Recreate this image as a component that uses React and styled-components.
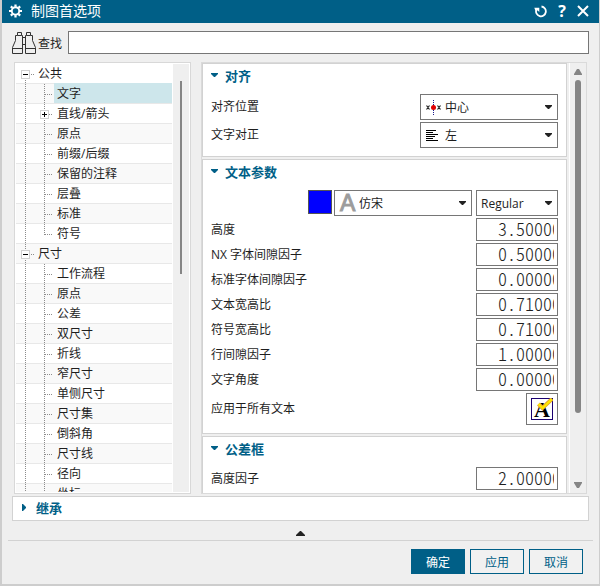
import React from 'react';
import styled, { createGlobalStyle } from 'styled-components';

const blue = '#005f87';
const panelGrey = '#efefef';
const line = '#d2d2d2';
const fieldLine = '#767676';

const treeItems = [
  { label: '公共', level: 1, first: true },
  { label: '文字', level: 2, selected: true },
  { label: '直线/箭头', level: 2, closed: true },
  { label: '原点', level: 2 },
  { label: '前缀/后缀', level: 2 },
  { label: '保留的注释', level: 2 },
  { label: '层叠', level: 2 },
  { label: '标准', level: 2 },
  { label: '符号', level: 2, last: true },
  { label: '尺寸', level: 1 },
  { label: '工作流程', level: 2 },
  { label: '原点', level: 2 },
  { label: '公差', level: 2 },
  { label: '双尺寸', level: 2 },
  { label: '折线', level: 2 },
  { label: '窄尺寸', level: 2 },
  { label: '单侧尺寸', level: 2 },
  { label: '尺寸集', level: 2 },
  { label: '倒斜角', level: 2 },
  { label: '尺寸线', level: 2 },
  { label: '径向', level: 2 },
  { label: '坐标', level: 2 },
];

const textParams = [
  { id: 'height', label: '高度', value: '3.50000' },
  { id: 'nxGap', label: 'NX 字体间隙因子', value: '0.50000' },
  { id: 'stdGap', label: '标准字体间隙因子', value: '0.00000' },
  { id: 'textRatio', label: '文本宽高比', value: '0.71000' },
  { id: 'symbolRatio', label: '符号宽高比', value: '0.71000' },
  { id: 'lineGap', label: '行间隙因子', value: '1.00000' },
  { id: 'angle', label: '文字角度', value: '0.00000' },
];

function GearIcon() {
  return (
    <svg width="13" height="14" viewBox="0 0 14 14" fill="none" stroke="#fff">
      <circle cx="7" cy="7" r="4" strokeWidth="2" />
      <path strokeWidth="2.4" d="M7 0v2.5M7 11.5V14M0 7h2.5M11.5 7H14M2 2l1.8 1.8M10.2 10.2L12 12M12 2l-1.8 1.8M3.8 10.2L2 12" />
    </svg>
  );
}

function ResetIcon() {
  return (
    <svg width="13" height="13" viewBox="0 0 13 13" fill="none" stroke="#fff">
      <path strokeWidth="1.800" d="M7.500 1.500A4.900 4.900 0 1 1 2.300 4.800" />
      <path fill="#fff" stroke="none" d="M.3 2.800h5v4.200L3.600 5.400 1.200 5.200z" />
    </svg>
  );
}

function CloseIcon() {
  return (
    <svg width="12" height="12" viewBox="0 0 12 12" stroke="#fff" strokeWidth="2">
      <path d="M1 1l10 10M11 1L1 11" />
    </svg>
  );
}

function BinocularsIcon() {
  return (
    <svg width="24" height="22" viewBox="0 0 24 22" fill="none" stroke="#333">
      <path d="M.5 21.500v-6l3-7v-5h2v-3h4v3h1v18zM23.500 21.500v-6l-3-7v-5h-2v-3h-4v3h-1v18zM.5 16.500h10M13.500 16.500h10M5.500 3.500h4M14.500 3.500h4M10.500 5.500h3M10.500 12.500h3" />
    </svg>
  );
}

const triangles = {
  down: { w: 7, h: 4, d: 'M0 0h7v1L4 4H3L0 1z' },
  right: { w: 4, h: 7, d: 'M0 0h1l3 3v1L1 7H0z' },
  up: { w: 9, h: 5, d: 'M0 5v-1L4 0h1l4 4v1z' },
  scrollUp: { w: 8, h: 6, d: 'M0 6v-1l3-5h2l3 5v1z' },
  scrollDown: { w: 8, h: 6, d: 'M0 0h8v1L5 6H3L0 1z' },
};

function Triangle({ direction, color = '#222' }) {
  const { w, h, d } = triangles[direction];
  return (
    <svg width={w} height={h} viewBox={`0 0 ${w} ${h}`} fill={color}>
      <path d={d} />
    </svg>
  );
}

function CenterIcon() {
  return (
    <svg width="15" height="15" viewBox="0 0 15 15">
      <path d="M7.500 0v15" stroke="#1a1a8c" strokeDasharray="1 1" />
      <path d="M.5 5.500l3 4M3.500 5.500l-3 4M11.500 5.500l3 4M14.500 5.500l-3 4" stroke="#222" strokeWidth="1.200" />
      <circle cx="7.500" cy="7.500" r="2.500" fill="#e00000" />
    </svg>
  );
}

function AlignLeftIcon() {
  return (
    <svg width="12" height="11" viewBox="0 0 12 11" stroke="#000">
      <path d="M0 .5h10M0 2.500h7M0 4.500h12M0 6.500h9M0 8.500h7M0 10.500h12" />
    </svg>
  );
}

function ApplyAllIcon() {
  return (
    <svg width="22" height="22" viewBox="0 0 22 22">
      <rect x=".5" y=".5" width="21" height="21" fill="#fff" stroke="#1a0070" />
      <text x="11" y="19" textAnchor="middle" fontFamily="Liberation Serif, serif" fontWeight="bold" fontSize="22">A</text>
      <path d="M7.500 6l4 4L21 1" fill="none" stroke="#e0a030" strokeWidth="4" />
      <path d="M7.500 6l4 4L21 1" fill="none" stroke="#ffe600" strokeWidth="2.400" />
    </svg>
  );
}

/* dotted connector and expander drawing in front of a tree label */
function Twig({ item }) {
  const dots = { stroke: '#8c8c8c', strokeDasharray: '1 1', shapeRendering: 'crispEdges' };
  if (item.level === 1) {
    return (
      <svg width="22" height="20">
        <path {...dots} d={item.first ? 'M9.500 16v4' : 'M9.500 0v5M9.500 16v4'} />
        <path {...dots} d="M15 10.500h4" />
        <rect x="5.500" y="6.500" width="8" height="8" fill="#fff" stroke="#d0d0d0" />
        <path d="M7 10.500h5" stroke="#000" />
      </svg>
    );
  }
  return (
    <svg width="38" height="20">
      <path {...dots} d="M9.500 0v20" />
      <path {...dots} d={item.last ? 'M28.500 0v11' : 'M28.500 0v20'} />
      <path {...dots} d="M29 10.500h8" />
      {item.closed && (
        <>
          <rect x="24.500" y="6.500" width="8" height="8" fill="#fff" stroke="#d0d0d0" />
          <path d="M26 10.500h5M28.500 8v5" stroke="#000" />
        </>
      )}
    </svg>
  );
}

function Group({ title, children }) {
  return (
    <GroupBox>
      <GroupHeader type="button" aria-expanded="true">
        <Marker><Triangle direction="down" color={blue} /></Marker>
        {title}
      </GroupHeader>
      <Rows>{children}</Rows>
    </GroupBox>
  );
}

function Dropdown({ id, value, icon, label, narrow }) {
  return (
    <SelectBox $narrow={narrow}>
      {icon && <SelectIcon>{icon}</SelectIcon>}
      <Select id={id} aria-label={label} defaultValue={value} $icon={Boolean(icon)}>
        <option>{value}</option>
      </Select>
      <SelectArrow><Triangle direction="down" /></SelectArrow>
    </SelectBox>
  );
}

function NumberRow({ id, label, value }) {
  return (
    <Row>
      <Label htmlFor={id}>{label}</Label>
      <NumberBox>
        <NumberInput id={id} type="text" defaultValue={value} />
      </NumberBox>
    </Row>
  );
}

function App() {
  return (
    <>
      <GlobalStyle />
      <Dialog>
        <TitleBar>
          <GearIcon />
          <Title>制图首选项</Title>
          <TitleButton type="button" aria-label="重置"><ResetIcon /></TitleButton>
          <TitleButton type="button">?</TitleButton>
          <TitleButton type="button" aria-label="关闭"><CloseIcon /></TitleButton>
        </TitleBar>
        <Content>
          <SearchRow>
            <BinocularsIcon />
            <label htmlFor="search">查找</label>
            <SearchInput id="search" type="text" />
          </SearchRow>
          <Panels>
            <TreePanel>
              <Tree role="tree">
                {treeItems.map((item, i) => (
                  <TreeRow key={i} role="treeitem" aria-selected={Boolean(item.selected)}>
                    <Twig item={item} />
                    <TreeLabel $level={item.level} $selected={item.selected}>{item.label}</TreeLabel>
                  </TreeRow>
                ))}
              </Tree>
              <TreeTrack><TreeThumb /></TreeTrack>
            </TreePanel>
            <Settings>
              <Groups>
                <Group title="对齐">
                  <Row>
                    <Label htmlFor="position">对齐位置</Label>
                    <Dropdown id="position" value="中心" icon={<CenterIcon />} />
                  </Row>
                  <Row>
                    <Label htmlFor="justify">文字对正</Label>
                    <Dropdown id="justify" value="左" icon={<AlignLeftIcon />} />
                  </Row>
                </Group>
                <Group title="文本参数">
                  <FontRow>
                    <Swatch type="button" aria-label="颜色" />
                    <Dropdown label="字体" value="仿宋" icon={<FontLetter>A</FontLetter>} />
                    <StyleCell>
                      <Dropdown label="字型" value="Regular" narrow />
                    </StyleCell>
                  </FontRow>
                  {textParams.map((p) => <NumberRow key={p.id} {...p} />)}
                  <Row>
                    <Label htmlFor="applyAll">应用于所有文本</Label>
                    <IconButton id="applyAll" type="button"><ApplyAllIcon /></IconButton>
                  </Row>
                </Group>
                <Group title="公差框">
                  <NumberRow id="frameHeight" label="高度因子" value="2.00000" />
                </Group>
              </Groups>
              <Track>
                <Triangle direction="scrollUp" color="#858585" />
                <Rail><Thumb /></Rail>
                <Triangle direction="scrollDown" color="#858585" />
              </Track>
            </Settings>
          </Panels>
          <InheritBar type="button" aria-expanded="false">
            <Marker><Triangle direction="right" color={blue} /></Marker>
            继承
          </InheritBar>
        </Content>
        <CollapseBar type="button" aria-label="收起"><Triangle direction="up" /></CollapseBar>
        <Footer>
          <FooterButton type="button" $primary>确定</FooterButton>
          <FooterButton type="button">应用</FooterButton>
          <FooterButton type="button">取消</FooterButton>
        </Footer>
      </Dialog>
    </>
  );
}

const GlobalStyle = createGlobalStyle`
  * {
    box-sizing: border-box;
  }
  body {
    margin: 0;
    background: ${panelGrey};
    color: #1e1e1e;
  }
  body, button, input, select {
    font-family: "Open Sans", "Noto Sans CJK SC", sans-serif;
    font-size: 12px;
  }
  button {
    cursor: pointer;
  }
  svg {
    display: block;
    flex: none;
  }
`;

const Dialog = styled.div`
  display: flex;
  flex-direction: column;
  height: 100vh;
  border: solid #cdcdcd;
  border-width: 0 1px 2px 2px;
  background: ${panelGrey};
`;

const TitleBar = styled.header`
  display: flex;
  align-items: center;
  flex: none;
  height: 23px;
  padding: 0 10px 1px 7px;
  gap: 9px;
  background: ${blue};
  color: #fff;
`;

const Title = styled.h1`
  flex: 1;
  margin: 0;
  font-size: 14px;
  line-height: 20px;
  font-weight: 400;
`;

const TitleButton = styled.button`
  display: flex;
  align-items: center;
  justify-content: center;
  min-width: 12px;
  padding: 0;
  border: 0;
  background: none;
  color: #fff;
  font-size: 16px;
  font-weight: 700;
  line-height: 20px;
`;

const Content = styled.main`
  display: flex;
  flex-direction: column;
  flex: 1;
  min-height: 0;
  padding: 8px 10px 0;
`;

const SearchRow = styled.div`
  display: flex;
  align-items: center;
  gap: 2px;
  flex: none;
`;

const SearchInput = styled.input`
  flex: 1;
  min-width: 0;
  height: 23px;
  margin-left: 4px;
  border: 1px solid ${fieldLine};
  background: #fff;
`;

const Panels = styled.div`
  display: flex;
  flex: 1;
  min-height: 0;
  gap: 10px;
  margin: 8px 2px 2px;
`;

const TreePanel = styled.nav`
  display: flex;
  flex: none;
  width: 177px;
  padding: 1px;
  gap: 1px;
  border: 1px solid #d8d8d8;
  background: #fff;
`;

const Tree = styled.ul`
  flex: 1;
  margin: 0;
  padding: 0;
  overflow: hidden;
  list-style: none;
`;

const TreeRow = styled.li`
  display: flex;
  height: 20px;
  box-shadow: inset 0 -1px #e8e8e8;

  &:nth-child(even) {
    background: #f9f9f9;
  }
`;

const TreeLabel = styled.span`
  flex: 1;
  height: 19px;
  padding-left: ${(p) => (p.$level === 2 ? '3px' : '0')};
  line-height: 19px;
  background: ${(p) => (p.$selected ? '#cde6eb' : 'transparent')};
  box-shadow: ${(p) => (p.$selected ? '0 -1px #cde6eb' : 'none')};
`;

const TreeTrack = styled.div`
  flex: none;
  width: 16px;
  padding: 17px 7px 0;
  background: ${panelGrey};
`;

const TreeThumb = styled.div`
  width: 2px;
  height: 47%;
  background: #858585;
`;

const Settings = styled.section`
  display: flex;
  flex: 1;
  min-width: 0;
  border: 1px solid #dadada;
`;

const Groups = styled.div`
  display: flex;
  flex-direction: column;
  flex: 1;
  min-width: 0;
  gap: 2px;
  overflow: hidden;
`;

const GroupBox = styled.section`
  flex: none;
  padding: 0 8px 8px;
  border: 1px solid ${line};
  background: #fff;
`;

const GroupHeader = styled.button`
  display: flex;
  align-items: center;
  width: 100%;
  height: 22px;
  margin-bottom: 8px;
  padding: 0;
  border: 0;
  background: none;
  color: ${blue};
  font-size: 13px;
  font-weight: 700;
`;

const Marker = styled.span`
  width: 14px;
`;

const Rows = styled.div`
  display: flex;
  flex-direction: column;
  gap: 2px;
`;

const Row = styled.div`
  display: flex;
  align-items: center;
  justify-content: space-between;
`;

const FontRow = styled.div`
  display: flex;
  justify-content: flex-end;
  gap: 2px;
`;

const StyleCell = styled.div`
  margin-left: 2px;
`;

const Label = styled.label`
  line-height: 18px;
`;

const SelectBox = styled.div`
  position: relative;
  width: ${(p) => (p.$narrow ? '82px' : '138px')};
  height: 26px;
  border: 1px solid ${fieldLine};
  background: #fff;
`;

const Select = styled.select`
  width: 100%;
  height: 100%;
  padding: 0 18px 0 ${(p) => (p.$icon ? '24px' : '4px')};
  appearance: none;
  border: 0;
  background: transparent;
  color: #1e1e1e;
`;

const SelectIcon = styled.span`
  position: absolute;
  top: 0;
  bottom: 0;
  left: 5px;
  display: flex;
  align-items: center;
  pointer-events: none;
`;

const SelectArrow = styled.span`
  position: absolute;
  top: 0;
  right: 5px;
  bottom: 0;
  display: flex;
  align-items: center;
  pointer-events: none;
`;

const FontLetter = styled.span`
  color: #9c9c9c;
  font-family: "Liberation Sans", sans-serif;
  font-size: 23px;
  -webkit-text-stroke: 1px #9c9c9c;
`;

const Swatch = styled.button`
  width: 24px;
  height: 24px;
  padding: 0;
  border: 1px solid #555;
  background: #0000ff;
`;

const NumberBox = styled.div`
  width: 82px;
  height: 23px;
  padding: 0 3px 0 21px;
  border: 1px solid ${fieldLine};
  background: #fff;
`;

const NumberInput = styled.input`
  display: block;
  width: 100%;
  height: 18px;
  padding: 0;
  border: 0;
  outline: 0;
  background: none;
  color: #1e1e1e;
  font-family: "Noto Sans CJK SC", sans-serif;
  font-size: 18px;
  font-weight: 300;
  font-feature-settings: "hwid";
`;

const IconButton = styled.button`
  display: flex;
  align-items: center;
  justify-content: center;
  width: 32px;
  height: 32px;
  padding: 0;
  border: 1px solid ${fieldLine};
  background: #fff;
`;

const Track = styled.div`
  display: flex;
  flex-direction: column;
  align-items: center;
  flex: none;
  width: 17px;
  margin-left: 2px;
  padding: 6px 0 5px;
  border-left: 1px solid #fff;
`;

const Rail = styled.div`
  flex: 1;
  width: 6px;
  margin: 5px 0;
`;

const Thumb = styled.div`
  height: 84%;
  border-radius: 3px;
  background: #858585;
`;

const InheritBar = styled.button`
  display: flex;
  align-items: center;
  flex: none;
  height: 25px;
  padding: 0 9px 2px;
  border: 1px solid ${line};
  background: #fff;
  color: ${blue};
  font-size: 13px;
  font-weight: 700;
`;

const CollapseBar = styled.button`
  display: flex;
  align-items: flex-end;
  justify-content: center;
  flex: none;
  height: 20px;
  margin: 0 6px;
  padding: 0 0 4px;
  border: 0;
  border-bottom: 1px solid ${line};
  background: none;
`;

const Footer = styled.footer`
  display: flex;
  justify-content: flex-end;
  flex: none;
  gap: 5px;
  padding: 8px 16px 10px;
`;

const FooterButton = styled.button`
  width: 54px;
  height: 25px;
  padding: 0;
  border: 1px solid ${blue};
  background: ${(p) => (p.$primary ? blue : '#f1f1f1')};
  color: ${(p) => (p.$primary ? '#fff' : blue)};
`;

export default App;
